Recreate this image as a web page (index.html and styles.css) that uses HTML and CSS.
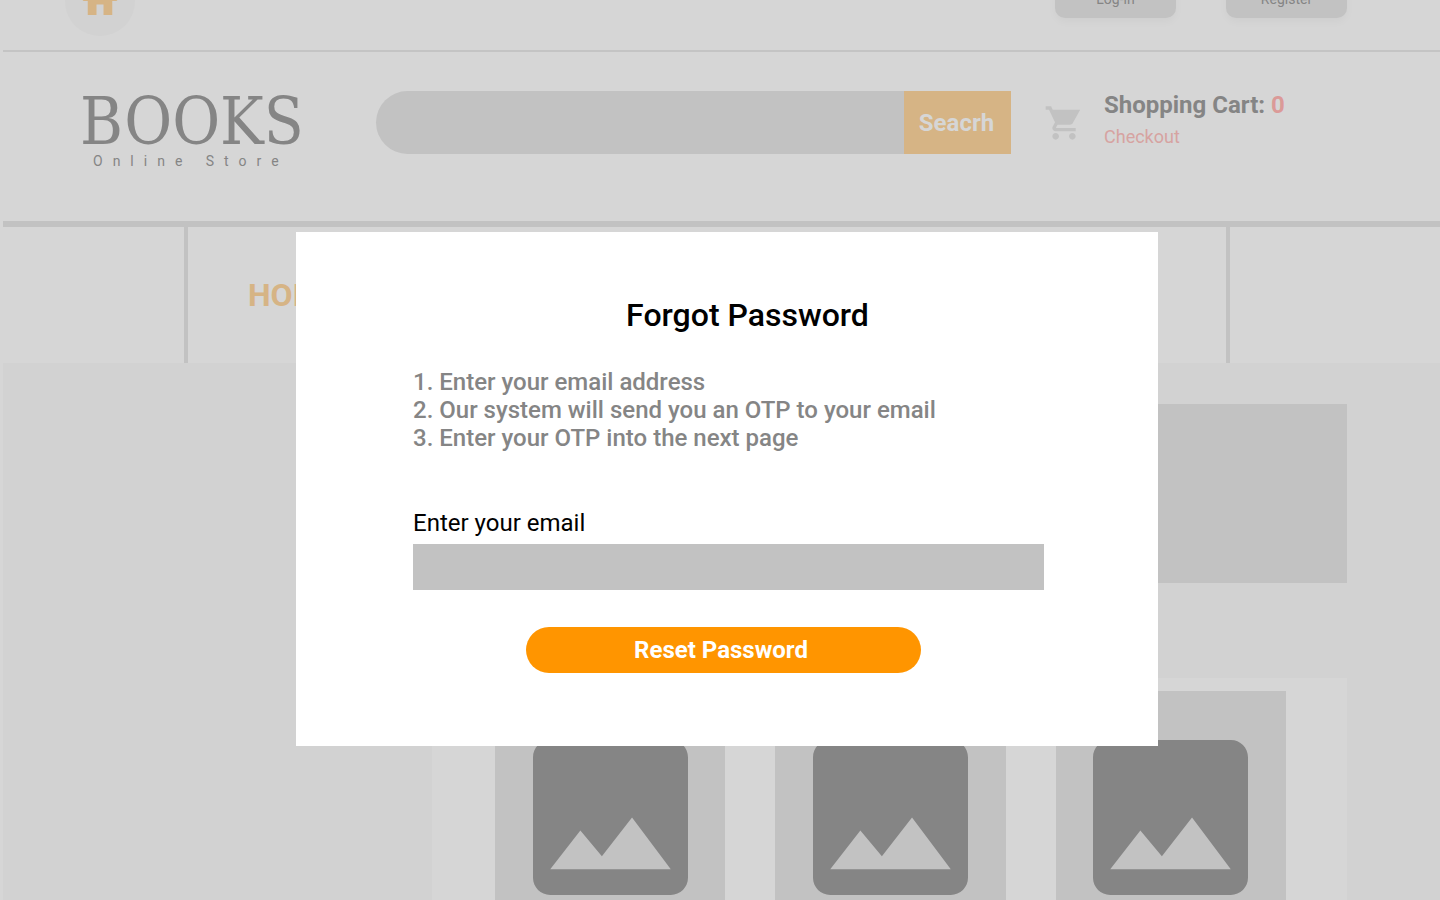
FILE: index.html
```html
<!DOCTYPE html>
<html lang="en">
<head>
<meta charset="utf-8">
<title>Books Online Store - Forgot Password</title>
<link rel="stylesheet" href="styles.css">
</head>
<body>
<svg class="sprite" aria-hidden="true">
  <symbol id="picture" viewBox="3 3 18 18">
    <path d="M21 19V5c0-1.1-.9-2-2-2H5c-1.1 0-2 .9-2 2v14c0 1.1.9 2 2 2h14c1.1 0 2-.9 2-2zM8.5 13.5l2.5 3.01L14.5 12l4.5 6H5l3.5-4.5z"/>
  </symbol>
</svg>
<div class="page">
  <div class="topbar">
    <a class="home" href="#" aria-label="Home"><svg viewBox="0 0 24 24"><path d="M10 20v-6h4v6h5v-8h3L12 3 2 12h3v8z"/></svg></a>
    <div class="account">
      <button class="account-button" type="button">Log-in</button>
      <button class="account-button" type="button">Register</button>
    </div>
  </div>
  <header class="header">
    <div class="logo">
      <div class="logo-name">BOOKS</div>
      <div class="logo-tagline">Online Store</div>
    </div>
    <form class="search">
      <input class="search-input" type="search" aria-label="Search books">
      <button class="search-button" type="button">Seacrh</button>
    </form>
    <div class="cart">
      <svg class="cart-icon" viewBox="0 0 24 24"><path d="M7 18c-1.1 0-1.99.9-1.99 2S5.9 22 7 22s2-.9 2-2-.9-2-2-2zM1 2v2h2l3.6 7.59-1.35 2.45c-.16.28-.25.61-.25.96 0 1.1.9 2 2 2h12v-2H7.42c-.14 0-.25-.11-.25-.25l.03-.12L8.1 13h7.45c.75 0 1.41-.41 1.75-1.03L21.700 4H5.210L4.270 2H1zm16 16c-1.100 0-1.990.900-1.990 2s.890 2 1.990 2 2-.900 2-2-.900-2-2-2z"/></svg>
      <div>
        <div class="cart-title">Shopping Cart: <span class="cart-count">0</span></div>
        <a class="checkout" href="#">Checkout</a>
      </div>
    </div>
  </header>
  <nav class="nav">
    <div class="nav-links"><a class="nav-link" href="#">HOME</a></div>
  </nav>
  <main class="main">
    <div class="banner"></div>
    <div class="products">
      <div class="product"><svg class="product-icon"><use href="#picture"/></svg></div>
      <div class="product"><svg class="product-icon"><use href="#picture"/></svg></div>
      <div class="product"><svg class="product-icon"><use href="#picture"/></svg></div>
    </div>
  </main>
</div>
<div class="overlay">
  <section class="dialog" role="dialog" aria-labelledby="dialog-title">
    <h1 class="dialog-title" id="dialog-title">Forgot Password</h1>
    <ol class="steps">
      <li>Enter your email address</li>
      <li>Our system will send you an OTP to your email</li>
      <li>Enter your OTP into the next page</li>
    </ol>
    <form class="reset-form">
      <label class="email-label" for="email">Enter your email</label>
      <input class="email-input" id="email" type="email">
      <button class="reset-button" type="button">Reset Password</button>
    </form>
  </section>
</div>
</body>
</html>
```
FILE: styles.css
```css
* {
  box-sizing: border-box;
}

body {
  margin: 0;
  height: 100vh;
  overflow: hidden;
  background: #d6d6d6;
  color: #858585;
  font-family: Roboto, "Liberation Sans", sans-serif;
}

button,
input {
  border: 0;
  padding: 0;
  font: inherit;
  border-radius: 0;
  appearance: none;
}

a {
  text-decoration: none;
}

svg {
  display: block;
  fill: currentColor;
}

.sprite {
  display: none;
}

.page {
  height: 100vh;
  margin-left: 3px;
  overflow: hidden;
  display: flex;
  flex-direction: column;
}

/* Top bar, scrolled partly out of view */
.topbar {
  flex: none;
  height: 52px;
  padding: 0 93px 0 62px;
  display: flex;
  justify-content: space-between;
  align-items: flex-end;
  border-bottom: 2px solid #c4c4c4;
}

.home {
  width: 70px;
  height: 70px;
  margin-bottom: 14px;
  border-radius: 50%;
  background: #d2d2d2;
  color: #d6b485;
  display: flex;
  align-items: center;
  justify-content: center;
}

.home svg {
  width: 42px;
  height: 42px;
}

.account {
  display: flex;
  gap: 50px;
  margin-bottom: 32px;
}

.account-button {
  width: 121px;
  height: 38px;
  border-radius: 10px;
  background: #c2c2c2;
  color: #858585;
  font-size: 14px;
  box-shadow: 0 4px 8px rgba(0, 0, 0, 0.03);
}

.header {
  flex: none;
  display: flex;
  align-items: flex-start;
  height: 169px;
  padding: 39px 93px 0 77px;
}

.logo {
  width: 220px;
  margin-right: 76px;
}

.logo-name {
  padding-top: 2px;
  font-family: "DejaVu Serif Condensed", "DejaVu Serif", serif;
  font-size: 65px;
  line-height: 58px;
}

.logo-tagline {
  padding-left: 13px;
  font-size: 14px;
  line-height: 20px;
  letter-spacing: 10px;
  white-space: nowrap;
}

.search {
  flex: 1;
  display: flex;
  height: 63px;
  margin-right: 33px;
}

.search-input {
  flex: 1;
  min-width: 0;
  padding-left: 32px;
  border-radius: 32px 0 0 32px;
  background: #c2c2c2;
}

.search-button {
  width: 107px;
  padding-right: 2px;
  background: #d6b485;
  color: #d6d6d6;
  font-size: 24px;
  font-weight: 700;
}

.cart {
  width: 303px;
  display: flex;
  gap: 20px;
}

.cart-icon {
  width: 40px;
  height: 40px;
  margin-top: 12px;
  color: #c2c2c2;
}

.cart-title {
  font-size: 24px;
  font-weight: 700;
  line-height: 28px;
}

.cart-count {
  color: #db9a98;
}

.checkout {
  display: block;
  margin-top: 4px;
  color: #d6a3a1;
  font-size: 18px;
  line-height: 28px;
}

.nav {
  flex: none;
  display: flex;
  height: 142px;
  padding: 0 210px 0 181px;
  border-top: 6px solid #c2c2c2;
}

.nav-links {
  flex: 1;
  display: flex;
  align-items: center;
  padding-left: 60px;
  border: solid #c2c2c2;
  border-width: 0 4px;
}

.nav-link {
  color: #d6b485;
  font-size: 32px;
  font-weight: 700;
}

.main {
  flex: 1;
  min-height: 0;
  padding: 41px 93px 0 429px;
  background: #d2d2d2;
}

.banner {
  height: 179px;
  margin-bottom: 95px;
  background: #c2c2c2;
}

.products {
  display: grid;
  grid-template-columns: repeat(3, 1fr);
  gap: 50px;
  padding: 13px 61px 0 63px;
  background: #d6d6d6;
}

.product {
  display: flex;
  justify-content: center;
  height: 320px;
  padding-top: 49px;
  background: #c2c2c2;
}

.product-icon {
  width: 155px;
  height: 155px;
}

.overlay {
  position: absolute;
  inset: 0;
  display: flex;
  justify-content: center;
  align-items: flex-start;
  padding: 232px 0 0 14px;
}

.dialog {
  width: 100%;
  max-width: 862px;
  padding: 64px 114px 73px 117px;
  background: #fff;
}

.dialog-title {
  margin: 0;
  padding-left: 38px;
  color: #000;
  font-size: 32px;
  font-weight: 500;
  line-height: 38px;
  text-align: center;
}

.steps {
  margin: 34px 0 57px;
  padding: 0;
  list-style-position: inside;
  font-size: 24px;
  font-weight: 500;
  line-height: 28px;
}

.reset-form {
  display: flex;
  flex-direction: column;
}

.email-label {
  margin-bottom: 7px;
  color: #000;
  font-size: 24px;
  line-height: 28px;
}

.email-input {
  height: 46px;
  padding: 0 12px;
  background: #c2c2c2;
  font-size: 24px;
}

.reset-button {
  width: 395px;
  height: 46px;
  margin: 37px 10px 0 0;
  padding-right: 5px;
  align-self: center;
  border-radius: 23px;
  background: #ff9500;
  color: #fff;
  font-size: 24px;
  font-weight: 700;
}
```
